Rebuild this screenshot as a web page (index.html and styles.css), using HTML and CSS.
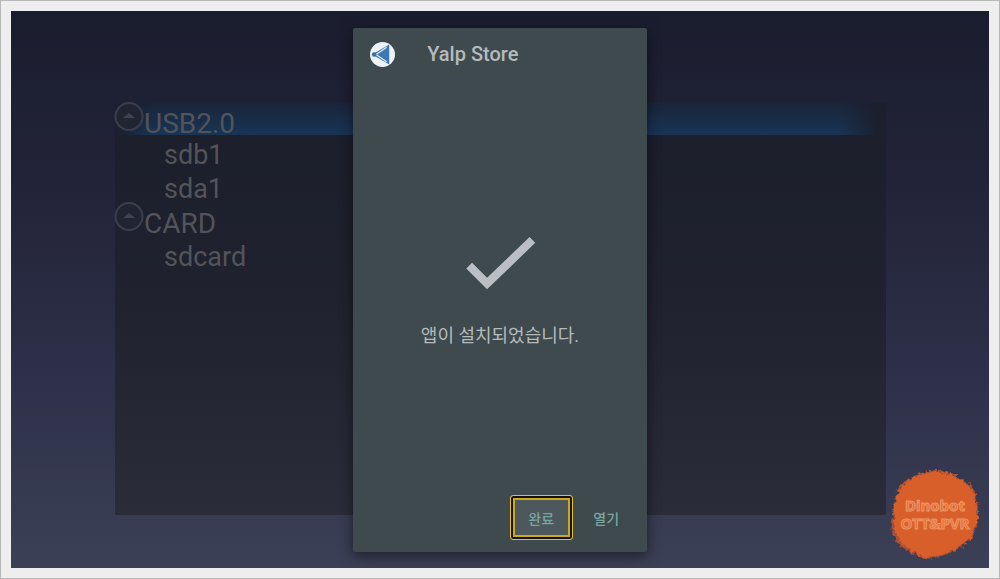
FILE: index.html
```html
<!DOCTYPE html>
<html lang="ko">
<head>
    <meta charset="UTF-8">
    <title>Yalp Store</title>
    <link rel="stylesheet" href="styles.css">
</head>
<body>
    <div class="screen">
        <div class="file-panel">
            <ul class="file-list">
                <li class="drive selected">
                    <svg class="arrow" viewBox="0 0 30 30"><circle cx="14" cy="13.5" r="13.5"/><path d="M8 15 L14 10 L20 15 Z"/></svg>
                    <span>USB2.0</span>
                </li>
                <li class="folder">sdb1</li>
                <li class="folder">sda1</li>
                <li class="drive">
                    <svg class="arrow" viewBox="0 0 30 30"><circle cx="14" cy="13.5" r="13.5"/><path d="M8 15 L14 10 L20 15 Z"/></svg>
                    <span>CARD</span>
                </li>
                <li class="folder">sdcard</li>
            </ul>
        </div>

        <div class="overlay">
            <div class="dialog" role="dialog" aria-labelledby="app-name">
                <div class="dialog-header">
                    <svg class="app-icon" viewBox="0 0 24 24">
                        <circle cx="12" cy="12" r="12" fill="#eef2f5"/>
                        <path d="M18.5 2.5 V21.5 L2 12 Z" fill="#3c78b4"/>
                        <path d="M3 10 L16 19 M3 14 L16 5" stroke="#e4edf4" stroke-width="1.1"/>
                        <circle cx="4" cy="12" r="2.2" fill="#3f6f9f"/>
                    </svg>
                    <h1 id="app-name">Yalp Store</h1>
                </div>
                <div class="dialog-body">
                    <svg class="check" viewBox="0 0 70 54"><path d="M5 29.5 L22.5 47 L66.5 4.5"/></svg>
                    <p>앱이 설치되었습니다.</p>
                </div>
                <div class="dialog-buttons">
                    <button type="button" class="focused">완료</button>
                    <button type="button">열기</button>
                </div>
            </div>
        </div>

        <div class="badge">
            <svg class="splat" viewBox="0 0 90 92">
                <filter id="rough">
                    <feTurbulence type="fractalNoise" baseFrequency="0.25" numOctaves="3" seed="4"/>
                    <feDisplacementMap in="SourceGraphic" scale="7" xChannelSelector="R" yChannelSelector="G"/>
                </filter>
                <path class="edge" filter="url(#rough)" d="M45 2 C58 1 68 8 78 15 C87 22 87 31 88 42 C89 54 86 63 80 72 C70 83 58 86 45 90 C33 92 23 86 13 80 C4 72 0 66 2 54 C4 44 2 35 7 24 C16 9 29 4 45 2 Z"/>
                <path class="paint" filter="url(#rough)" d="M44 4 C58 3 66 9 76 16 C85 23 86 32 87 42 C88 53 85 62 79 71 C69 81 57 85 44 89 C34 91 25 85 16 79 C7 72 5 64 4 53 C5 43 3 35 8 25 C17 10 30 5 44 4 Z"/>
            </svg>
            <div class="badge-text">Dinobot<br>OTT&amp;PVR</div>
        </div>
    </div>
</body>
</html>
```
FILE: styles.css
```css
* {
    box-sizing: border-box;
}
body {
    margin: 0;
    height: 100vh;
    padding: 10px;
    border: 1px solid #b8b8b8;
    background: #eee;
    font-family: Roboto, "Noto Sans CJK KR", sans-serif;
}
.screen {
    position: relative;
    height: 100%;
    padding: 92px 103px 53px 104px;
    overflow: hidden;
    background: linear-gradient(#1a1d2e, #222338 30%, #2d3048 65%, #3c4056);
}

/* file browser */
.file-panel {
    height: 100%;
    background: linear-gradient(#1b1e2b, #20222f 50%, #2a2c3a);
}
.file-list {
    margin: 0;
    padding: 0;
    list-style: none;
    color: #52545a;
}
.drive {
    display: flex;
    height: 34px;
    font-size: 28px;
    line-height: 41px;
}
.drive.selected {
    height: 32px;
    background:
        linear-gradient(to right, #1c1f2e, transparent 5%, transparent 94%, #1c1f2c 99%),
        linear-gradient(#1a2539, #183556);
}
.folder {
    height: 34px;
    padding-left: 49px;
    font-size: 27px;
    line-height: 40px;
}
.arrow {
    width: 30px;
    height: 30px;
    margin-right: -1px;
    flex-shrink: 0;
    overflow: visible;
}
.arrow circle {
    fill: #202433;
    stroke: #3b3e4b;
    stroke-width: 2;
}
.arrow path {
    fill: #3f434d;
}

/* install dialog */
.overlay {
    position: absolute;
    inset: 0;
    display: flex;
    justify-content: center;
    padding: 17px 0 16px;
}
.dialog {
    display: flex;
    flex-direction: column;
    width: 30%;
    min-width: 280px;
    border-radius: 2px;
    background: #3e4a4d;
    box-shadow: 0 4px 14px rgba(0, 0, 0, 0.5);
    color: #b5bbbd;
}
.dialog-header {
    display: flex;
    align-items: center;
    gap: 32px;
    padding: 12px 17px;
}
.app-icon {
    width: 25px;
    height: 25px;
}
h1 {
    margin: 0;
    font-size: 20px;
    font-weight: 500;
    line-height: 28px;
}
.dialog-body {
    flex: 1;
    display: flex;
    flex-direction: column;
    align-items: center;
    justify-content: center;
    gap: 32px;
    padding-top: 8px;
}
.dialog-body p {
    margin: 0;
    font-size: 18px;
    line-height: 26px;
}
.check {
    width: 72px;
    height: 56px;
}
.check path {
    fill: none;
    stroke: #b9bfc2;
    stroke-width: 8;
}
.dialog-buttons {
    display: flex;
    justify-content: flex-end;
    gap: 2px;
    padding: 0 9px 12px;
}
button {
    width: 63px;
    height: 45px;
    padding: 0;
    border: none;
    border-radius: 3px;
    background: none;
    color: #77a5a2;
    font-family: inherit;
    font-size: 14px;
    font-weight: 500;
}
button.focused {
    border: 1px solid #e8c21d;
    background: #4c585b;
    box-shadow: inset 0 0 0 2px #15130c, inset 0 0 0 4px #cba91c;
}

/* watermark */
.badge {
    position: absolute;
    right: 9px;
    bottom: 8px;
    display: grid;
    place-items: center;
}
.badge > * {
    grid-area: 1 / 1;
}
.splat {
    width: 90px;
    height: 92px;
}
.splat .edge {
    fill: #a95034;
}
.splat .paint {
    fill: #d95f2a;
}
.badge-text {
    color: #e0703c;
    font-family: "Noto Sans", sans-serif;
    font-size: 15px;
    font-weight: 700;
    line-height: 18px;
    text-align: center;
    -webkit-text-stroke: 1px #ef9664;
}
```
